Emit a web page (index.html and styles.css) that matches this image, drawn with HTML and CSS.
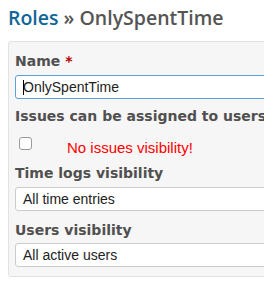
FILE: index.html
```html
<!DOCTYPE html>
<html>
<head>
    <title>Roles - OnlySpentTime</title>
    <meta charset="UTF-8">
    <meta name="viewport" content="width=device-width, initial-scale=1.0">
    <link rel="stylesheet" href="styles.css">
</head>
<body>
  <div class="content">
    <h2><a href="#">Roles</a> &raquo; OnlySpentTime</h2>

    <div class="box tabular">
      <label for="role_name">Name <span class="required">*</span></label>
      <div class="focus-wrap">
        <input type="text" id="role_name" name="role_name" value="OnlySpentTime">
        <span class="caret"></span>
      </div>

      <label for="role_assignable">Issues can be assigned to users</label>
      <div class="check-row">
        <input type="checkbox" id="role_assignable" name="role_assignable">
        <span class="warning">No issues visibility!</span>
      </div>

      <label for="role_time_entries_visibility">Time logs visibility</label>
      <select id="role_time_entries_visibility" name="role_time_entries_visibility" class="first">
        <option>All time entries</option>
        <option>Time entries created by the user</option>
      </select>

      <label for="role_users_visibility">Users visibility</label>
      <select id="role_users_visibility" name="role_users_visibility">
        <option>All active users</option>
        <option>Members of visible projects</option>
      </select>
    </div>
  </div>
</body>
</html>
```

FILE: styles.css
```css
body {
  margin: 0;
  padding: 0;
  background-color: #ffffff;
  font-family: "DejaVu Sans", Verdana, sans-serif;
  overflow: hidden;
}
.content {
  padding: 6px 0 0 8px;
}
h2 {
  margin: 0;
  font-family: "Open Sans", sans-serif;
  font-size: 19.5px;
  font-weight: 600;
  line-height: 24px;
  color: #555555;
  white-space: nowrap;
}
h2 a {
  color: #116699;
  text-decoration: none;
}
.box {
  width: 380px;
  margin-top: 11px;
  padding: 11px 0 9px 6px;
  background: #f6f6f6;
  border: 1px solid #e2e2e2;
  border-radius: 3px;
}
.tabular label {
  display: block;
  font-size: 14px;
  font-weight: bold;
  line-height: 17px;
  color: #505050;
  white-space: nowrap;
  margin-bottom: 5px;
}
.required {
  color: #bb0000;
}
.focus-wrap {
  position: relative;
  margin-bottom: 9px;
}
input[type="text"],
select {
  display: block;
  box-sizing: border-box;
  width: 100%;
  height: 24px;
  margin: 0;
  padding: 0 7px;
  font-family: "Liberation Sans", Arial, sans-serif;
  font-size: 14px;
  color: #222222;
  background: #ffffff;
  border: 1px solid #cccccc;
  border-radius: 3px;
  outline: none;
  -webkit-appearance: none;
  appearance: none;
}
input[type="text"] {
  border-color: #5aa0da;
}
.caret {
  position: absolute;
  left: 8px;
  top: 5px;
  width: 1px;
  height: 15px;
  background: #000000;
}
.tabular label[for="role_assignable"] {
  margin-bottom: 9px;
}
.check-row {
  display: flex;
  align-items: flex-start;
  height: 22px;
  margin-bottom: 9px;
}
input[type="checkbox"] {
  -webkit-appearance: none;
  appearance: none;
  width: 13px;
  height: 13px;
  margin: 3px 3px 3px 4px;
  background: #ffffff;
  border: 1px solid #9a9a9a;
  border-radius: 3px;
}
.warning {
  margin: 5px 0 0 32px;
  font-family: "Liberation Sans", Arial, sans-serif;
  font-size: 15px;
  line-height: 17px;
  color: #ff0000;
}
select.first {
  margin-bottom: 11px;
}
.tabular label[for="role_users_visibility"] {
  margin-bottom: 4px;
}
```
